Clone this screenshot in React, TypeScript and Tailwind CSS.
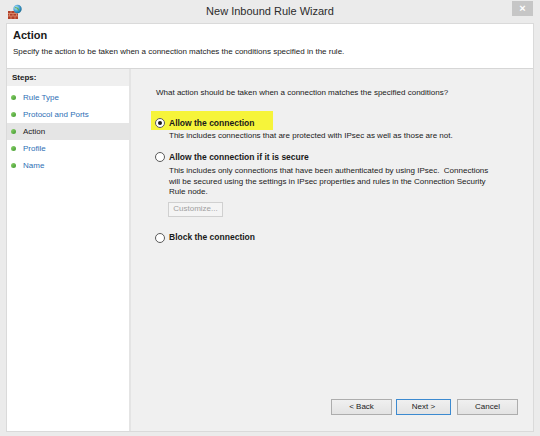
import React from "react";

const steps = [
  { label: "Rule Type", active: false },
  { label: "Protocol and Ports", active: false },
  { label: "Action", active: true },
  { label: "Profile", active: false },
  { label: "Name", active: false },
];

function FirewallIcon() {
  return (
    <svg width="16" height="16" viewBox="0 0 16 16">
      <defs>
        <radialGradient id="globe" cx="0.35" cy="0.35" r="0.7">
          <stop offset="0" stopColor="#bfe9ff" />
          <stop offset="0.6" stopColor="#3d9bd0" />
          <stop offset="1" stopColor="#1c6a8f" />
        </radialGradient>
      </defs>
      <rect x="1" y="7" width="10" height="8" fill="#b0412a" />
      <path d="M1 9.5h10M1 12h10M4 7v2.5M8 7v2.5M2.5 9.5V12M6 9.5V12M9.5 9.5V12M4 12v3M8 12v3" stroke="#e59a7a" strokeWidth="0.7" />
      <circle cx="10.5" cy="5" r="4.2" fill="url(#globe)" />
      <path d="M8 3.5c1 .5 1.5 0 2.5.8s.4 1.8 1.5 2" stroke="#5fae4a" strokeWidth="1.1" fill="none" />
    </svg>
  );
}

function Radio({ checked }: { checked?: boolean }) {
  return (
    <span className="relative flex h-[10px] w-[10px] shrink-0 items-center justify-center rounded-full border border-[#5a5a5a] bg-white">
      {checked && <span className="h-[4px] w-[4px] rounded-full bg-[#1a1a1a]" />}
    </span>
  );
}

function Button({ children, primary }: { children: React.ReactNode; primary?: boolean }) {
  return (
    <div
      className={
        "flex h-[16px] items-center justify-center border bg-gradient-to-b from-[#f0f0f0] to-[#e3e3e3] text-[8px] text-[#1a1a1a] " +
        (primary ? "w-[55px] border-[#3c8ad0]" : "w-[61px] border-[#adadad]")
      }
    >
      {children}
    </div>
  );
}

export default function App() {
  return (
    <div
      className="flex h-[436px] w-[540px] flex-col bg-[#ebebeb] text-[#1a1a1a]"
      style={{ fontFamily: '"Liberation Sans", Arial, sans-serif' }}
    >
      {/* title bar */}
      <div className="relative flex h-[23px] shrink-0 items-center justify-center">
        <div className="absolute left-[7px] top-[4px]">
          <FirewallIcon />
        </div>
        <span className="text-[11px] text-[#2b2b2b]">New Inbound Rule Wizard</span>
        <div className="absolute right-[7px] top-[1px] flex h-[15px] w-[21px] items-center justify-center bg-[#c6c6c6] text-[11px] font-bold leading-none text-white">
          ×
        </div>
      </div>

      {/* client area */}
      <div className="mx-[6px] mb-[4px] flex flex-1 flex-col border border-[#dadada]">
        <div className="flex h-[45px] shrink-0 flex-col border-b border-[#d6d6d6] bg-white pl-[6px]">
          <div className="mt-[4px] text-[11px] font-bold leading-[14px]">Action</div>
          <div className="mt-[5px] text-[8px] leading-[10px]">
            Specify the action to be taken when a connection matches the conditions specified in the rule.
          </div>
        </div>

        <div className="flex flex-1">
          {/* steps pane */}
          <div className="flex w-[122px] shrink-0 flex-col bg-white">
            <div className="flex h-[17px] items-center bg-[#efefef] pl-[5px] text-[8px] font-bold">Steps:</div>
            <div className="mt-[3px] flex flex-col">
              {steps.map((s) => (
                <div
                  key={s.label}
                  className={
                    "flex h-[17px] items-center text-[8px] " +
                    (s.active ? "bg-[#e5e5e5] text-[#1a1a1a]" : "text-[#2e6fb5]")
                  }
                >
                  <span className="ml-[4px] h-[5px] w-[5px] rounded-full bg-gradient-to-br from-[#8fd46f] to-[#3e9a2c]" />
                  <span className="ml-[7px]">{s.label}</span>
                </div>
              ))}
            </div>
          </div>

          {/* options pane */}
          <div className="flex flex-1 flex-col border-l-2 border-[#e4e4e4] bg-[#f0f0f0] pl-[24px] pr-[15px]">
            <div className="ml-[1px] mt-[19px] text-[8px] leading-[10px]">
              What action should be taken when a connection matches the specified conditions?
            </div>

            <div className="relative mt-[20px] flex h-[10px] items-center gap-[4px]">
              <div className="absolute left-[-4px] top-[-7px] h-[19px] w-[122px] bg-[#f6f43a]" />
              <span className="relative"><Radio checked /></span>
              <span className="relative text-[8.5px] font-bold">Allow the connection</span>
            </div>
            <div className="ml-[14px] mt-[3px] text-[8px] leading-[10px]">
              This includes connections that are protected with IPsec as well as those are not.
            </div>

            <div className="mt-[11px] flex h-[10px] items-center gap-[4px]">
              <Radio />
              <span className="text-[8.5px] font-bold">Allow the connection if it is secure</span>
            </div>
            <div className="ml-[14px] mt-[4px] w-[320px] text-[8px] leading-[10.5px]">
              This includes only connections that have been authenticated by using IPsec.&nbsp; Connections will be secured using the settings in IPsec properties and rules in the Connection Security Rule node.
            </div>
            <div className="ml-[13px] mt-[4px] flex h-[15px] w-[55px] items-center justify-center border border-[#d0d0d0] bg-[#f4f4f4] text-[8px] text-[#a0a0a0]">
              Customize...
            </div>

            <div className="mt-[16px] flex h-[10px] items-center gap-[4px]">
              <Radio />
              <span className="text-[8.5px] font-bold">Block the connection</span>
            </div>

            <div className="flex-1" />
            <div className="mb-[16px] flex justify-end">
              <Button>&lt; Back</Button>
              <div className="ml-[4px]"><Button primary>Next &gt;</Button></div>
              <div className="ml-[6px]"><Button>Cancel</Button></div>
            </div>
          </div>
        </div>
      </div>
    </div>
  );
}
